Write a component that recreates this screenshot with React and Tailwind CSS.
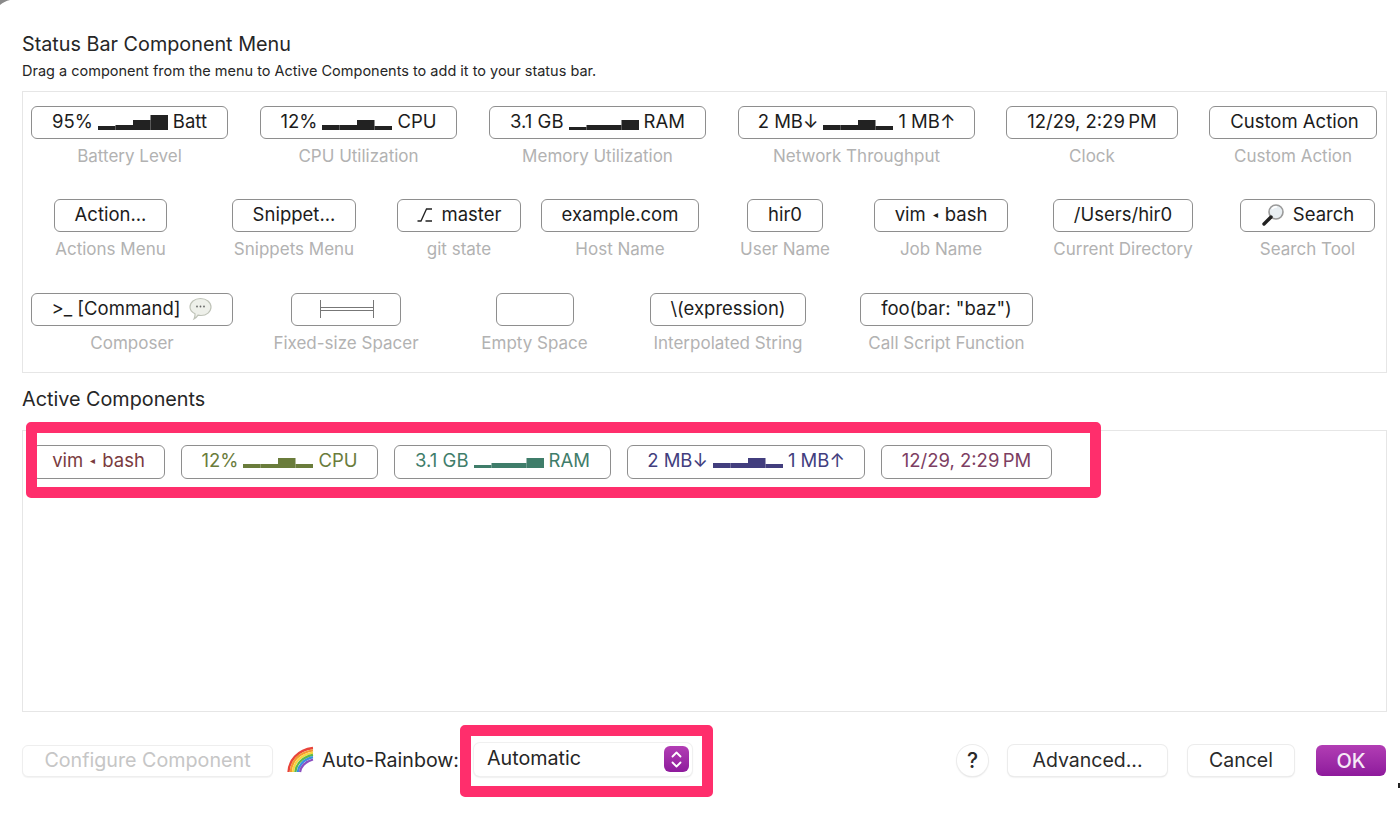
const F = "font-['Inter','Liberation_Sans',sans-serif]";

function Spark({ h, color = "#222", mb = "mb-[6px]" }) {
  return (
    <svg width="70" height="16" viewBox="0 0 70 16" className={"mx-[5px] shrink-0 self-end " + mb}>
      {h.map((v, i) => (
        <rect key={i} x={i * 17.5} y={16 - v} width="17.5" height={v} fill={color} />
      ))}
    </svg>
  );
}

function Git() {
  return (
    <svg width="16" height="16" viewBox="0 0 16 16" className="mr-[9px] shrink-0" fill="none" stroke="#222" strokeWidth="1.300">
      <path d="M0.500 14H4L9.500 2H15M8.500 14H15" />
    </svg>
  );
}

function Magnifier() {
  return (
    <svg width="24" height="24" viewBox="0 0 24 24" className="mr-[8px] shrink-0">
      <circle cx="15" cy="9" r="7" fill="#e8eef2" stroke="#9a9a9a" strokeWidth="1.600" />
      <path d="M11 6c1-1.600 3-2.400 5-2" stroke="#fff" strokeWidth="1.600" fill="none" />
      <path d="M10 14L3 21" stroke="#222" strokeWidth="3.400" strokeLinecap="round" />
    </svg>
  );
}

function Bubble() {
  return (
    <svg width="25" height="24" viewBox="0 0 25 24" className="ml-[7px] shrink-0">
      <path d="M12.500 1.500c6 0 10.500 3.700 10.500 8.600s-4.500 8.400-10 8.400c-1 0-2-.1-3-.4-1 1.600-2.600 3.400-4 3.900.8-1.300 1.200-3 1-5.200C3.800 15.300 2 12.900 2 10.100 2 5.200 6.500 1.500 12.500 1.500z" fill="#eef0ea" stroke="#bfc3b8" strokeWidth="1.200" />
      <circle cx="9" cy="9.500" r="0.900" fill="#666" />
      <circle cx="12.500" cy="9.500" r="0.900" fill="#666" />
      <circle cx="16" cy="9.500" r="0.900" fill="#666" />
    </svg>
  );
}

function SpacerIcon() {
  return (
    <svg width="56" height="18" viewBox="0 0 56 18" fill="none" stroke="#777" strokeWidth="1" className="ml-[2px]">
      <path d="M1.500 0V18M54.500 0V18M1.500 7.500H54.500M1.500 10.500H54.500" />
    </svg>
  );
}

function Rainbow() {
  return (
    <svg width="28" height="28" viewBox="0 0 28 28" fill="none" className="mr-[7px] shrink-0" strokeWidth="2.300">
      <path d="M1.500 26C2 15 10 4 26 2" stroke="#e8443a" />
      <path d="M3.800 26C4.300 16 11 6.500 26 4.300" stroke="#f29a30" />
      <path d="M6.100 26C6.600 17.500 12.500 9 26 6.600" stroke="#f7d63e" />
      <path d="M8.400 26C9 19 14 11.300 26 8.900" stroke="#5cb947" />
      <path d="M10.700 26C11.300 20.500 15.500 13.500 26 11.200" stroke="#3a8fe0" />
      <path d="M13 26C13.600 22 17 15.800 26 13.500" stroke="#8b4fc0" />
    </svg>
  );
}

function Tri() {
  return <span className="mx-[7px] text-[10px]">◂</span>;
}

function Pill({ children, className = "h-[33px] pb-[2px]", color = "text-[#1c1c1c]" }) {
  return (
    <div className={"flex items-center justify-center rounded-[6px] border border-[#8e8e8e] bg-white text-[18.500px] whitespace-nowrap " + color + " " + className}>
      {children}
    </div>
  );
}

function Cell({ label, cls, pill, children }) {
  return (
    <div className={"flex shrink-0 flex-col items-center " + cls}>
      <Pill className={"h-[33px] pb-[2px] " + pill}>{children}</Pill>
      <div className="mt-[7px] text-[17px] leading-[20px] whitespace-nowrap text-[#b2b2b2]">{label}</div>
    </div>
  );
}

function Btn({ children, className }) {
  return (
    <div className={"flex h-[31px] items-center justify-center rounded-[6px] bg-white text-[19.500px] text-[#2a2a2a] shadow-[0_0_0_1px_#ececec,0_1px_2px_rgba(0,0,0,0.18)] " + className}>
      {children}
    </div>
  );
}

export default function App() {
  return (
    <div className={"relative h-[829px] w-[1400px] overflow-hidden bg-white pl-[22px] pr-[14px] pt-[32px] " + F}>
      <svg width="14" height="6" viewBox="0 0 14 6" className="absolute left-0 top-0">
        <path d="M0 5C3 2.500 6 1 10 0H0Z" fill="#8a8a8a" />
      </svg>
      <div className="absolute right-0 top-[783px] h-[5px] w-[2px] bg-[#222]" />

      <div className="text-[19.800px] leading-[24px] text-[#262626]">Status Bar Component Menu</div>
      <div className="mt-[6px] text-[14.500px] leading-[18px] text-[#262626]">Drag a component from the menu to Active Components to add it to your status bar.</div>

      <section className="mt-[11px] h-[282px] w-[1365px] border border-[#e6e6e6] pl-[8px] pt-[14px]">
        <div className="flex h-[93px]">
          <Cell label="Battery Level" cls="w-[197px]" pill="w-full">95%<Spark h={[4, 5, 10, 15]} />Batt</Cell>
          <Cell label="CPU Utilization" cls="ml-[32px] w-[197px]" pill="w-full">12%<Spark h={[5, 5, 10, 4]} />CPU</Cell>
          <Cell label="Memory Utilization" cls="ml-[32px] w-[217px]" pill="w-full">3.1 GB<Spark h={[3, 5, 5, 10]} />RAM</Cell>
          <Cell label="Network Throughput" cls="ml-[32px] w-[237px]" pill="w-full">2 MB↓<Spark h={[5, 5, 10, 4]} />1 MB↑</Cell>
          <Cell label="Clock" cls="ml-[31px] w-[172px]" pill="w-full">12/29, 2:29{"\u202f"}PM</Cell>
          <Cell label="Custom Action" cls="ml-[31px] w-[168px]" pill="w-full pl-[3px]">Custom Action</Cell>
        </div>
        <div className="flex h-[94px]">
          <Cell label="Actions Menu" cls="ml-[23px] w-[113px]" pill="w-full">Action...</Cell>
          <Cell label="Snippets Menu" cls="ml-[65px] w-[124px]" pill="w-full">Snippet...</Cell>
          <Cell label="git state" cls="ml-[41px] w-[124px]" pill="w-full"><Git />master</Cell>
          <Cell label="Host Name" cls="ml-[20px] w-[158px]" pill="w-full">example.com</Cell>
          <Cell label="User Name" cls="ml-[41px] w-[90px]" pill="w-[76px]">hir0</Cell>
          <Cell label="Job Name" cls="ml-[44px] w-[134px]" pill="w-full">vim<Tri />bash</Cell>
          <Cell label="Current Directory" cls="ml-[45px] w-[140px]" pill="w-full">/Users/hir0</Cell>
          <Cell label="Search Tool" cls="ml-[47px] w-[135px]" pill="w-full"><Magnifier />Search</Cell>
        </div>
        <div className="flex h-[79px]">
          <Cell label="Composer" cls="w-[202px]" pill="w-full">&gt;_ [Command]<Bubble /></Cell>
          <Cell label="Fixed-size Spacer" cls="ml-[39px] w-[148px]" pill="w-[110px]"><SpacerIcon /></Cell>
          <Cell label="Empty Space" cls="ml-[61px] w-[107px]" pill="w-[78px]" />
          <Cell label="Interpolated String" cls="ml-[62px] w-[156px]" pill="w-full">\(expression)</Cell>
          <Cell label="Call Script Function" cls="ml-[54px] w-[173px]" pill="w-full">foo(bar: "baz")</Cell>
        </div>
      </section>

      <div className="mt-[14px] text-[19.800px] leading-[24px] text-[#262626]">Active Components</div>

      <section className="mt-[19px] h-[282px] w-[1365px] border border-[#e6e6e6] pl-[9px] pt-[14px]">
        <div className="flex gap-[16px]">
          <Pill className="h-[34px] w-[133px] pb-[3px]" color="text-[#7a3b40]">vim<Tri />bash</Pill>
          <Pill className="h-[34px] w-[197px] pb-[3px]" color="text-[#6a7c3b]">12%<Spark h={[4, 4, 10, 4]} color="#6a7c3b" mb="mb-[7px]" />CPU</Pill>
          <Pill className="h-[34px] w-[217px] pb-[3px]" color="text-[#3f7d6a]">3.1 GB<Spark h={[3, 5, 5, 10]} color="#3f7d6a" mb="mb-[7px]" />RAM</Pill>
          <Pill className="h-[34px] w-[238px] pb-[3px]" color="text-[#423e7e]">2 MB↓<Spark h={[5, 5, 10, 4]} color="#423e7e" mb="mb-[7px]" />1 MB↑</Pill>
          <Pill className="h-[34px] w-[171px] pb-[3px]" color="text-[#7d3e62]">12/29, 2:29{"\u202f"}PM</Pill>
        </div>
      </section>

      <div className="mt-[33px] flex h-[31px] items-center">
        <div className="flex h-[32px] w-[251px] items-center justify-center rounded-[6px] border border-[#eeeeee] bg-white text-[19.700px] text-[#c6c6c6] shadow-[0_1px_1px_rgba(0,0,0,0.05)]">Configure Component</div>
        <div className="ml-[14px] flex items-center text-[19.600px] text-[#262626]">
          <Rainbow />
          Auto-Rainbow:
        </div>
        <div className="-mt-[3px] ml-[15px] flex h-[33px] w-[218px] items-center justify-between rounded-[6px] bg-white pl-[13px] pr-[3px] text-[19.700px] text-[#262626] shadow-[0_0_0_1px_#f0f0f0,0_1px_2px_rgba(0,0,0,0.2)]">
          Automatic
          <div className="flex h-[26px] w-[25px] items-center justify-center rounded-[6px] bg-gradient-to-b from-[#b23db4] to-[#8e1a9c]">
            <svg width="13" height="19" viewBox="0 0 13 19" fill="none" stroke="#fff" strokeWidth="1.800" strokeLinecap="round" strokeLinejoin="round">
              <path d="M2.500 6.500L6.500 2.500L10.500 6.500M2.500 12.500L6.500 16.500L10.500 12.500" />
            </svg>
          </div>
        </div>
        <div className="ml-auto flex items-center">
          <Btn className="w-[31px] rounded-full text-[21px] font-medium">?</Btn>
          <Btn className="ml-[20px] w-[159px]">Advanced...</Btn>
          <Btn className="ml-[21px] w-[106px]">Cancel</Btn>
          <div className="ml-[22px] flex h-[31px] w-[70px] items-center justify-center rounded-[6px] bg-gradient-to-b from-[#b23db4] to-[#8e1a9c] text-[20px] font-medium text-[#f6e9f7]">OK</div>
        </div>
      </div>

      <div className="pointer-events-none absolute left-[26px] top-[422px] h-[76px] w-[1075px] rounded-[5px] border-[11px] border-[#ff2e6c]" />
      <div className="pointer-events-none absolute left-[460px] top-[725px] h-[72px] w-[253px] rounded-[5px] border-[11px] border-[#ff2e6c]" />
    </div>
  );
}
